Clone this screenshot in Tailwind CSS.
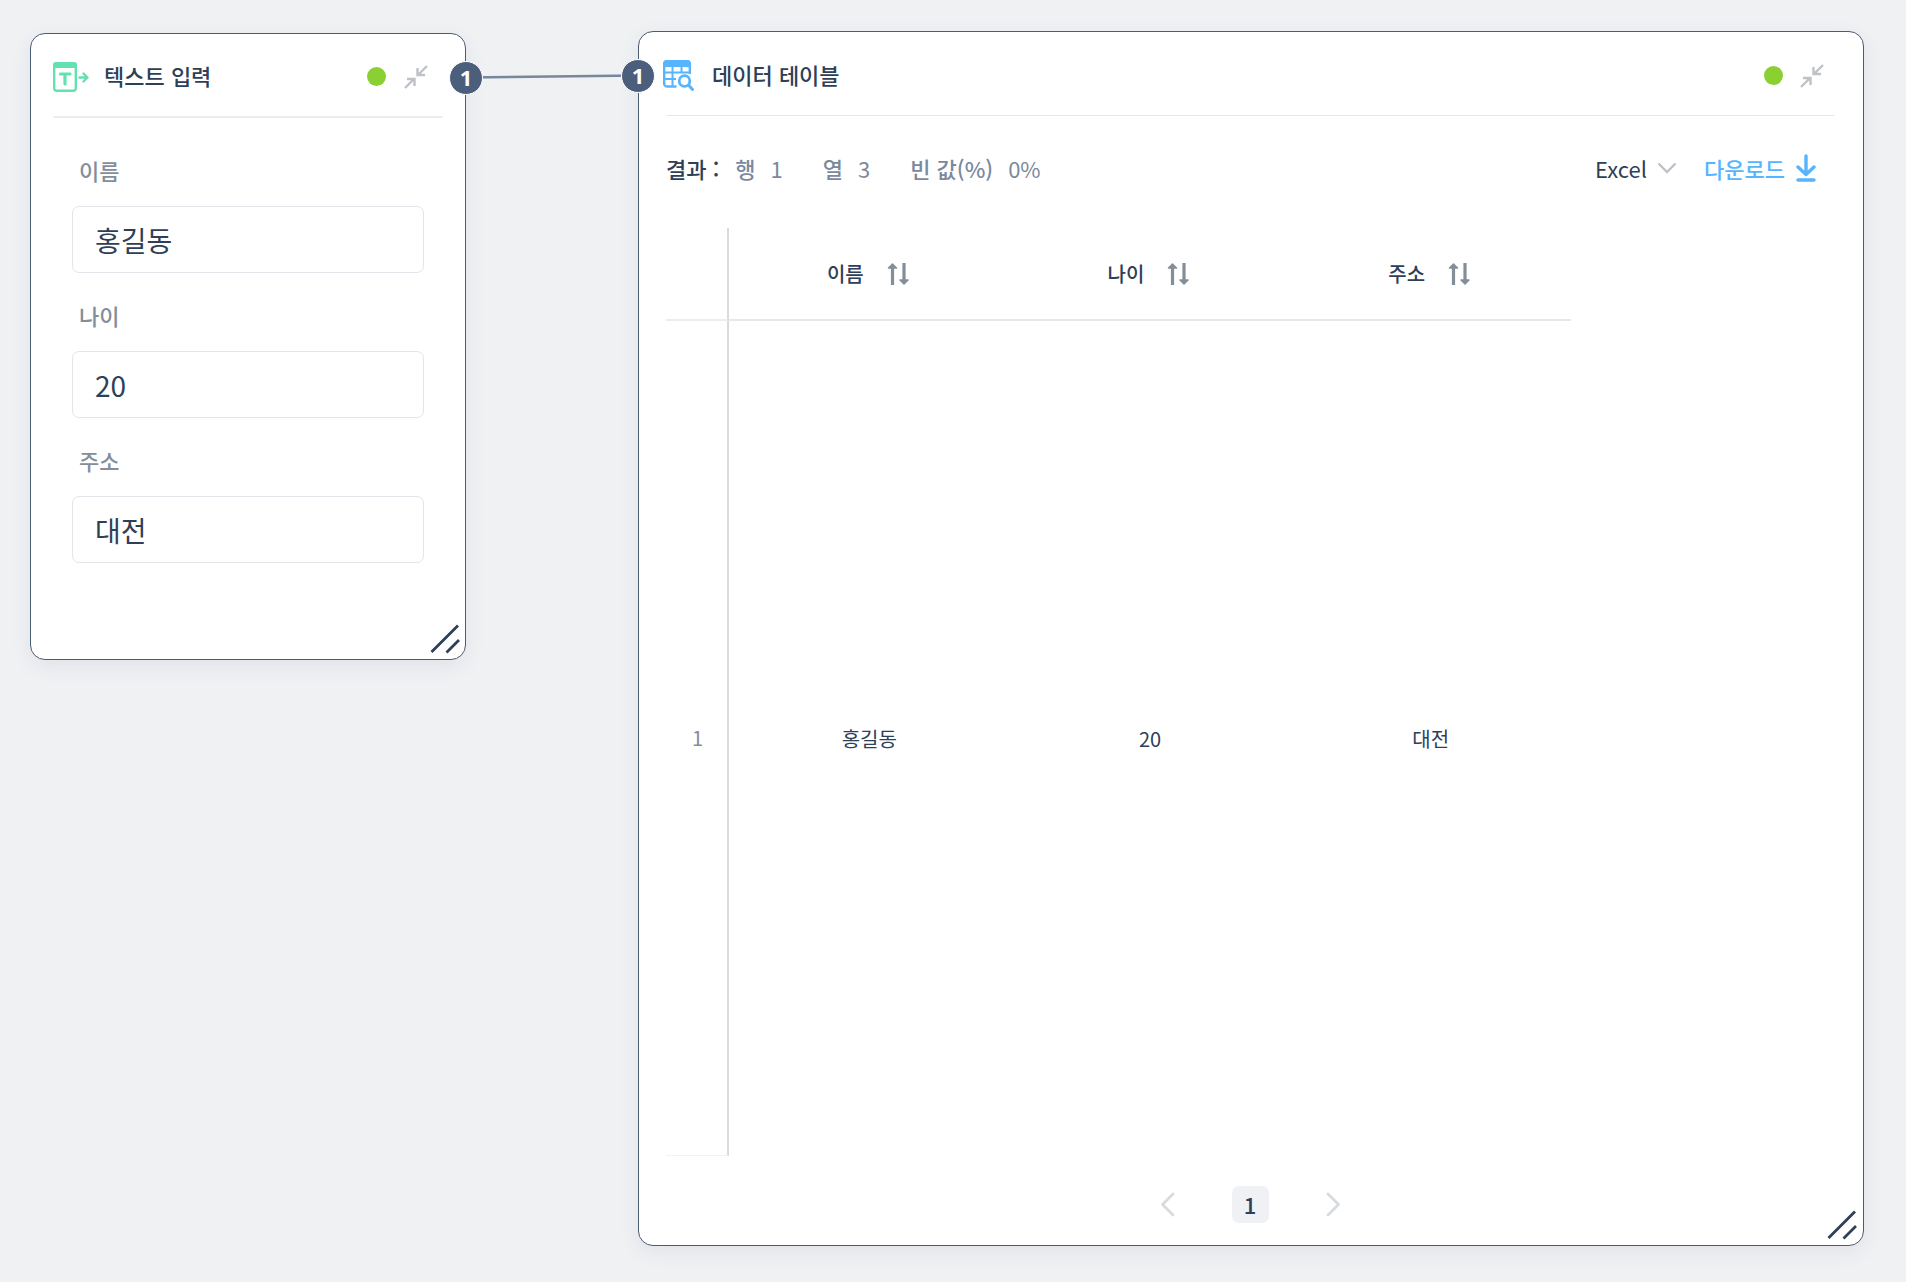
<!DOCTYPE html>
<html lang="ko">
<head>
<meta charset="utf-8">
<title>데이터 플로우</title>
<script src="https://cdn.jsdelivr.net/npm/@tailwindcss/browser@4"></script>
</head>
<body class="bg-[#f0f1f3] font-['Noto_Sans_CJK_KR',sans-serif] text-[#2e4057]">
<main class="flex min-h-screen items-stretch pt-[31px] pr-[42px] pb-[36px] pl-[30px]">

  <!-- Text input node -->
  <section class="relative mt-[2px] flex h-[627px] w-[436px] shrink-0 flex-col rounded-[15px] border border-[#4a5b74] bg-white shadow-[0_6px_20px_rgba(46,64,110,0.08)]">
    <header class="mx-[22px] flex h-[84px] items-center border-b-2 border-[#e9eeef] pt-[3px]">
      <svg class="h-[32px] w-[36px] shrink-0" viewBox="0 0 36 32" fill="none" stroke="#63e2b0">
        <rect x="1.2" y="2.2" width="21.6" height="27.6" rx="2.5" stroke-width="2.4"/>
        <path d="M0 7V4a3 3 0 0 1 3-3h18a3 3 0 0 1 3 3v3z" fill="#63e2b0" stroke="none"/>
        <path d="M7.500 13h9.500M12 13v10" stroke-width="3.200" stroke-linecap="round"/>
        <path d="M26.500 16.500h7.500M30.500 12.500l4 4-4 4" stroke-width="2.400" stroke-linecap="round" stroke-linejoin="round"/>
      </svg>
      <h2 class="ml-[15px] flex-1 pb-[3px] text-[22px] leading-8 font-medium">텍스트 입력</h2>
      <span class="size-[19px] rounded-full bg-[#8bd032]"></span>
      <button class="mr-[15px] ml-[18px]" type="button" aria-label="접기">
        <svg class="size-[24px]" viewBox="0 0 24 24" fill="none" stroke="#bfc1c8" stroke-width="2.400"><path d="M1 23l9-9M3 14h7.500v7M23 1l-9 9M13.500 3v7h7.500"/></svg>
      </button>
    </header>
    <form class="flex flex-col px-[41px] pt-[38px]">
      <label for="name" class="ml-[7px] h-[50px] text-[22px] leading-7 font-medium text-[#848e9b]">이름</label>
      <input id="name" value="홍길동" class="mb-[28px] h-[67px] w-full rounded-[7px] border border-[#e2e5e9] px-[22px] text-[28px]">
      <label for="age" class="ml-[7px] h-[50px] text-[22px] leading-7 font-medium text-[#848e9b]">나이</label>
      <input id="age" value="20" class="mb-[28px] h-[67px] w-full rounded-[7px] border border-[#e2e5e9] px-[22px] text-[28px]">
      <label for="address" class="ml-[7px] h-[50px] text-[22px] leading-7 font-medium text-[#848e9b]">주소</label>
      <input id="address" value="대전" class="h-[67px] w-full rounded-[7px] border border-[#e2e5e9] px-[22px] text-[28px]">
    </form>
    <svg class="absolute right-[5px] bottom-[5px] h-[30px] w-[30px]" viewBox="0 0 30 30" stroke="#2e4057" stroke-width="2.800"><path d="M1.500 28L28 1.500M16.500 28.500L29 16" /></svg>
    <span class="absolute top-[27px] -right-[18px] z-10 flex size-[34px] items-center justify-center rounded-full border border-white bg-[#4b5f7c] pb-[3px] font-['Noto_Sans',sans-serif] text-[22px] leading-8 font-bold text-white">1</span>
  </section>

  <!-- Connector -->
  <svg class="mt-[41px] h-[8px] w-[172px] shrink-0" viewBox="0 0 172 8" stroke="#7787a0" stroke-width="2.600"><path d="M0 5.500L172 3.500"/></svg>

  <!-- Data table node -->
  <section class="relative flex min-w-0 flex-1 flex-col rounded-[15px] border border-[#4a5b74] bg-white shadow-[0_6px_20px_rgba(46,64,110,0.08)]">
    <span class="absolute top-[27px] -left-[18px] flex size-[34px] items-center justify-center rounded-full border border-white bg-[#4b5f7c] pb-[3px] font-['Noto_Sans',sans-serif] text-[22px] leading-8 font-bold text-white">1</span>
    <header class="mr-[29px] ml-[24px] flex h-[83px] items-center pt-[4px]">
      <svg class="size-[32px] shrink-0" viewBox="0 0 32 32" fill="none" stroke="#56b5fe">
        <path d="M13.500 26.500H4A2.700 2.700 0 0 1 1.200 23.800V4A2.700 2.700 0 0 1 4 1.200h20A2.700 2.700 0 0 1 26.800 4v10" stroke-width="2.400"/>
        <path d="M0 7V4a4 4 0 0 1 4-4h20a4 4 0 0 1 4 4v3z" fill="#56b5fe" stroke="none"/>
        <path d="M1 12.500h25.500M1 19h12M9.500 6v20M18.500 6v7" stroke-width="2"/>
        <circle cx="21.500" cy="21" r="5.300" stroke-width="2.800"/>
        <path d="M25.500 25l4 4.500" stroke-width="3" stroke-linecap="round"/>
      </svg>
      <h2 class="ml-[17px] flex-1 pb-[4px] text-[22px] leading-8 font-medium">데이터 테이블</h2>
      <span class="size-[19px] rounded-full bg-[#8bd032]"></span>
      <button class="mr-[10px] ml-[17px]" type="button" aria-label="접기">
        <svg class="size-[24px]" viewBox="0 0 24 24" fill="none" stroke="#bfc1c8" stroke-width="2.400"><path d="M1 23l9-9M3 14h7.500v7M23 1l-9 9M13.500 3v7h7.500"/></svg>
      </button>
    </header>
    <div class="mr-[29px] ml-[27px] flex flex-1 flex-col border-t border-[#e3e8ef]">
      <div class="mt-[36px] flex h-[32px] items-center text-[22px] leading-8 text-[#7b899e]">
        <strong class="font-medium text-[#2e4057]">결과 :</strong>
        <span class="ml-[16px] font-medium">행</span><span class="ml-[15px]">1</span>
        <span class="ml-[40px] font-medium">열</span><span class="ml-[15px]">3</span>
        <span class="ml-[40px] font-medium">빈 값(%)</span><span class="ml-[15px]">0%</span>
        <div class="relative ml-auto text-[#2e4057]">
          <select aria-label="파일 형식" class="block w-[84px] appearance-none bg-transparent"><option>Excel</option></select>
          <svg class="pointer-events-none absolute top-[10px] right-[2px] h-[12px] w-[20px]" viewBox="0 0 20 12" fill="none" stroke="#bfc1c8" stroke-width="2.400"><path d="M1.500 1.500L10 10l8.500-8.500"/></svg>
        </div>
        <button type="button" class="mr-[18px] ml-[25px] flex items-center gap-[11px] font-medium text-[#56b5fe]">다운로드
          <svg class="h-[28px] w-[20px]" viewBox="0 0 20 28" fill="none" stroke="#56b5fe" stroke-width="3.400" stroke-linecap="round" stroke-linejoin="round"><path d="M10 2v18.500M2 13l8 7.500 8-7.500M2 26h16"/></svg>
        </button>
      </div>
      <table class="mt-[44px] w-[905px] flex-1 table-fixed border-separate border-spacing-0 text-[20px] leading-8">
        <thead>
          <tr class="h-[93px]">
            <th class="w-[63px] border-r-2 border-b-2 border-r-[#d8dade] border-b-[#ebedef]"></th>
            <th class="border-b-2 border-[#e6e8eb] font-medium"><button type="button" class="inline-flex items-center gap-[23px] pr-[2px]">이름<svg class="h-[22px] w-[23px]" viewBox="0 0 23 22" fill="none" stroke="#848e9b" stroke-width="3.200"><path d="M5.500 22V4M17 0v18"/><path d="M1.500 5l4-4 4 4zM13 17l4 4 4-4z" fill="#848e9b" stroke-width="1.500" stroke-linejoin="round"/></svg></button></th>
            <th class="border-b-2 border-[#e6e8eb] font-medium"><button type="button" class="inline-flex items-center gap-[23px] pr-[2px]">나이<svg class="h-[22px] w-[23px]" viewBox="0 0 23 22" fill="none" stroke="#848e9b" stroke-width="3.200"><path d="M5.500 22V4M17 0v18"/><path d="M1.500 5l4-4 4 4zM13 17l4 4 4-4z" fill="#848e9b" stroke-width="1.500" stroke-linejoin="round"/></svg></button></th>
            <th class="border-b-2 border-[#e6e8eb] font-medium"><button type="button" class="inline-flex items-center gap-[23px] pr-[2px]">주소<svg class="h-[22px] w-[23px]" viewBox="0 0 23 22" fill="none" stroke="#848e9b" stroke-width="3.200"><path d="M5.500 22V4M17 0v18"/><path d="M1.500 5l4-4 4 4zM13 17l4 4 4-4z" fill="#848e9b" stroke-width="1.500" stroke-linejoin="round"/></svg></button></th>
          </tr>
        </thead>
        <tbody>
          <tr class="text-center">
            <td class="border-r-2 border-b border-r-[#d8dade] border-b-[#f1f2f3] pl-[2px] text-[#848e9b]">1</td>
            <td>홍길동</td>
            <td>20</td>
            <td>대전</td>
          </tr>
        </tbody>
      </table>
      <nav class="flex h-[89px] items-center justify-center gap-[57px] pt-[7px]" aria-label="페이지">
        <button type="button" aria-label="이전"><svg class="h-[25px] w-[15px]" viewBox="0 0 15 25" fill="none" stroke="#d7dade" stroke-width="2.800" stroke-linecap="round" stroke-linejoin="round"><path d="M13 2L2.500 12.500 13 23"/></svg></button>
        <button type="button" class="flex size-[37px] items-center justify-center rounded-[7px] bg-[#f0f1f4] text-[22px] leading-8 font-medium">1</button>
        <button type="button" aria-label="다음"><svg class="h-[25px] w-[15px]" viewBox="0 0 15 25" fill="none" stroke="#d7dade" stroke-width="2.800" stroke-linecap="round" stroke-linejoin="round"><path d="M2 2l10.500 10.500L2 23"/></svg></button>
      </nav>
    </div>
    <svg class="absolute right-[6px] bottom-[5px] h-[30px] w-[30px]" viewBox="0 0 30 30" stroke="#2e4057" stroke-width="2.800"><path d="M1.500 28L28 1.500M16.500 28.500L29 16" /></svg>
  </section>
</main>
</body>
</html>
